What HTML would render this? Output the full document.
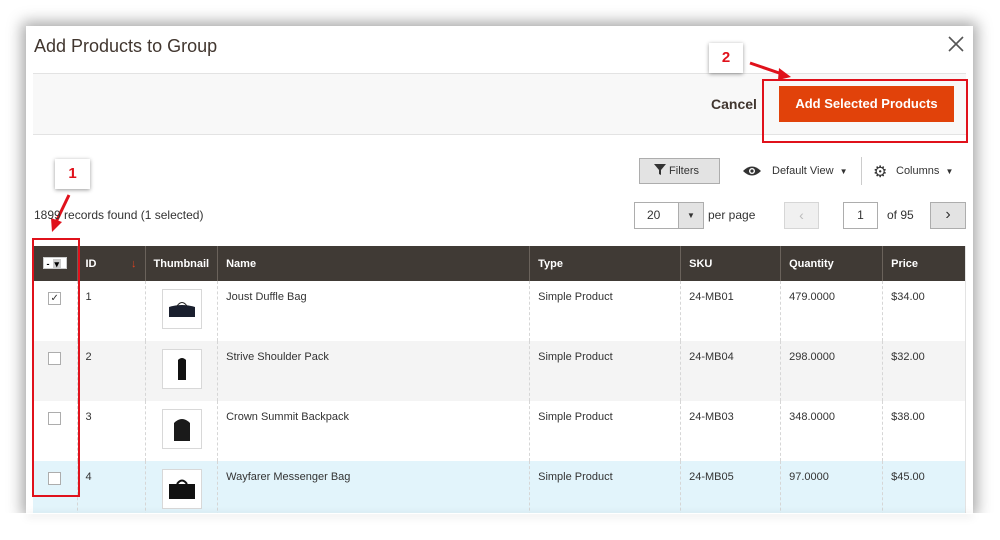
<!DOCTYPE html>
<html><head><style>
*{box-sizing:border-box}
body{margin:0;width:1000px;height:540px;background:#fff;font-family:"Liberation Sans",sans-serif;position:relative;overflow:hidden;color:#333}
.abs{position:absolute}
.modal{left:26px;top:26px;width:947px;height:487px;background:#fff;box-shadow:0 0 14px 4px rgba(0,0,0,.35);overflow:hidden}
table{border-collapse:collapse;position:absolute;left:33px;top:246px;width:933px;font-size:11px;border-right:1px solid #e3e3e3}
th{background:#403a35;color:#fff;text-align:left;height:35px;padding:0 8px;font-weight:bold;border-left:1px solid #6a625b}
td{vertical-align:top;padding:10px 8px;height:60px;border-left:1px dashed #d6d6d6;color:#333}
tr.g td{background:#f4f4f4}
tr.b td{background:#e2f4fb}
.thumb{width:40px;height:40px;border:1px solid #d8d8d8;background:#fff;margin-left:8px;margin-top:-2px;display:flex;align-items:center;justify-content:center}
.cb{width:13px;height:13px;border:1px solid #adadad;background:#fff;margin:1px auto 0;font-size:10px;line-height:11px;text-align:center}
.callout{background:#fff;box-shadow:0 1px 4px rgba(0,0,0,.4);color:#e0111b;font-weight:bold;font-size:15px;text-align:center}
.btn{border:1px solid #adadad;background:#e3e3e3}
</style></head><body>
<div class="abs modal"></div>
<div class="abs" style="left:34px;top:36px;font-size:18px;color:#41362f">Add Products to Group</div>
<svg class="abs" style="left:947px;top:35px" width="18" height="18"><path d="M2 2L16 16M16 2L2 16" stroke="#555" stroke-width="1.6"/></svg>
<div class="abs" style="left:33px;top:73px;width:933px;height:62px;background:#f8f8f8;border-top:1px solid #e3e3e3;border-bottom:1px solid #e3e3e3"></div>
<div class="abs" style="left:711px;top:96px;font-size:14px;font-weight:bold;color:#41362f">Cancel</div>
<div class="abs" style="left:779px;top:86px;width:175px;height:36px;background:#e1420a;color:#fff;font-weight:bold;font-size:13px;text-align:center;line-height:36px">Add Selected Products</div>
<div class="abs" style="left:762px;top:79px;width:206px;height:64px;border:2px solid #e0111b"></div>
<div class="abs callout" style="left:709px;top:43px;width:34px;height:30px;line-height:30px">2</div>
<svg class="abs" style="left:745px;top:55px" width="50" height="30"><path d="M5 8L40 20" stroke="#e0111b" stroke-width="3"/><path d="M46 22L34 13L33 25Z" fill="#e0111b"/></svg>

<div class="abs callout" style="left:55px;top:159px;width:35px;height:30px;line-height:30px">1</div>
<svg class="abs" style="left:44px;top:192px" width="30" height="50"><path d="M25 3L12 30" stroke="#e0111b" stroke-width="3"/><path d="M8 40L7 26L18 30Z" fill="#e0111b"/></svg>
<div class="abs" style="left:34px;top:208px;font-size:12px;color:#333">1899 records found (1 selected)</div>

<div class="abs btn" style="left:639px;top:158px;width:81px;height:26px;font-size:11px;line-height:24px;padding-left:14px"><svg width="12" height="11" style="vertical-align:-1px"><path d="M0 0H12L7 6V11L5 10V6Z" fill="#333"/></svg> Filters</div>
<svg class="abs" style="left:742px;top:165px" width="20" height="12"><path d="M1 6Q10 -3 19 6Q10 15 1 6Z" fill="#333"/><circle cx="10" cy="6" r="3" fill="#fff"/><circle cx="10" cy="6" r="1.6" fill="#333"/></svg>
<div class="abs" style="left:772px;top:165px;font-size:11px;color:#333">Default View &nbsp;<span style="font-size:8px">▼</span></div>
<div class="abs" style="left:861px;top:157px;width:1px;height:28px;background:#ccc"></div>
<div class="abs" style="left:873px;top:162px;font-size:16px;color:#333">⚙</div>
<div class="abs" style="left:896px;top:165px;font-size:11px;color:#333">Columns &nbsp;<span style="font-size:8px">▼</span></div>

<div class="abs" style="left:634px;top:202px;width:70px;height:27px;border:1px solid #adadad;background:#fff;font-size:12px;line-height:25px;padding-left:12px">20</div>
<div class="abs" style="left:678px;top:202px;width:26px;height:27px;border:1px solid #adadad;background:#e3e3e3;font-size:8px;text-align:center;line-height:25px">▼</div>
<div class="abs" style="left:708px;top:208px;font-size:12px">per page</div>
<div class="abs" style="left:784px;top:202px;width:35px;height:27px;border:1px solid #d6d6d6;background:#f0f0f0;color:#bbb;text-align:center;line-height:25px;font-size:14px">‹</div>
<div class="abs" style="left:843px;top:202px;width:35px;height:27px;border:1px solid #adadad;background:#fff;text-align:center;line-height:25px;font-size:12px">1</div>
<div class="abs" style="left:887px;top:208px;font-size:12px">of 95</div>
<div class="abs btn" style="left:930px;top:202px;width:36px;height:27px;text-align:center;line-height:24px;font-size:16px">›</div>

<table>
<tr><th style="width:44px;border-left:none;padding:0 0 0 10px"><span style="display:inline-block;width:24px;height:12px;background:#fff;color:#000;font-size:9px;line-height:12px;border:1px solid #ccc">&nbsp;-<span style="background:#ccc;padding:0 2px;margin-left:3px">▾</span></span></th>
<th style="width:68px">ID<span style="float:right;color:#e0411f">↓</span></th><th style="width:72px">Thumbnail</th><th style="width:312px">Name</th><th style="width:151px">Type</th><th style="width:100px">SKU</th><th style="width:102px">Quantity</th><th>Price</th></tr>
<tr><td style="border-left:none"><div class="cb">✓</div></td><td>1</td><td><div class="thumb"><svg width="30" height="20"><path d="M2 8Q15 4 28 8V18H2Z" fill="#1a1f2e"/><path d="M10 7Q15 0 20 7" stroke="#222" fill="none"/></svg></div></td><td>Joust Duffle Bag</td><td>Simple Product</td><td>24-MB01</td><td>479.0000</td><td>$34.00</td></tr>
<tr class="g"><td style="border-left:none"><div class="cb"></div></td><td>2</td><td><div class="thumb"><svg width="20" height="30"><path d="M6 6Q10 2 14 6V26H6Z" fill="#111"/></svg></div></td><td>Strive Shoulder Pack</td><td>Simple Product</td><td>24-MB04</td><td>298.0000</td><td>$32.00</td></tr>
<tr><td style="border-left:none"><div class="cb"></div></td><td>3</td><td><div class="thumb"><svg width="24" height="28"><path d="M4 8Q12 0 20 8V26H4Z" fill="#1a1a1a"/></svg></div></td><td>Crown Summit Backpack</td><td>Simple Product</td><td>24-MB03</td><td>348.0000</td><td>$38.00</td></tr>
<tr class="b"><td style="border-left:none"><div class="cb"></div></td><td>4</td><td><div class="thumb"><svg width="32" height="24"><path d="M3 7H29V22H3Z" fill="#111"/><path d="M11 7Q16 0 21 7" stroke="#111" fill="none" stroke-width="2"/></svg></div></td><td>Wayfarer Messenger Bag</td><td>Simple Product</td><td>24-MB05</td><td>97.0000</td><td>$45.00</td></tr>
</table>
<div class="abs" style="left:0;top:513px;width:1000px;height:27px;background:#fff"></div>
<div class="abs" style="left:26px;top:513px;width:947px;height:1px;box-shadow:0 2px 8px rgba(0,0,0,.35)"></div>
<div class="abs" style="left:32px;top:238px;width:48px;height:259px;border:2px solid #e0111b"></div>
</body></html>
